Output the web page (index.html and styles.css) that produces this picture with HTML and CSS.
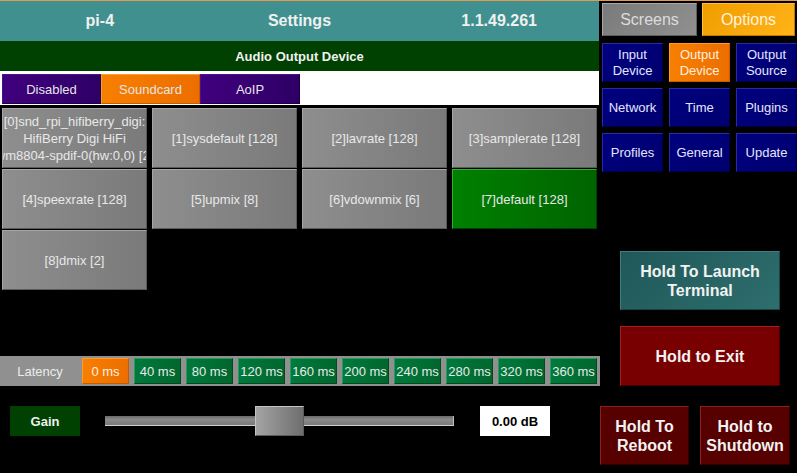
FILE: index.html
```html
<!DOCTYPE html>
<html>
<head>
<meta charset="utf-8">
<link rel="stylesheet" href="styles.css">
</head>
<body>
<div class="app">
  <div class="left">
    <div class="header">
      <div class="hcell">pi-4</div>
      <div class="hcell">Settings</div>
      <div class="hcell">1.1.49.261</div>
    </div>
    <div class="subheader">Audio Output Device</div>
    <div class="tabrow">
      <div class="tab purple">Disabled</div>
      <div class="tab orange">Soundcard</div>
      <div class="tab purple wide">AoIP</div>
    </div>
    <div class="devices">
      <div class="dev multi">
        <div class="ln"><span>[0]snd_rpi_hifiberry_digi:</span></div>
        <div class="ln"><span>HifiBerry Digi HiFi</span></div>
        <div class="ln"><span>wm8804-spdif-0(hw:0,0) [2]</span></div>
      </div>
      <div class="dev">[1]sysdefault [128]</div>
      <div class="dev">[2]lavrate [128]</div>
      <div class="dev">[3]samplerate [128]</div>
      <div class="dev">[4]speexrate [128]</div>
      <div class="dev">[5]upmix [8]</div>
      <div class="dev">[6]vdownmix [6]</div>
      <div class="dev selected">[7]default [128]</div>
      <div class="dev">[8]dmix [2]</div>
    </div>
    <div class="latency">
      <div class="lat-label">Latency</div>
      <div class="lat-buttons">
        <div class="lat lat-on">0 ms</div>
        <div class="lat">40 ms</div>
        <div class="lat">80 ms</div>
        <div class="lat">120 ms</div>
        <div class="lat">160 ms</div>
        <div class="lat">200 ms</div>
        <div class="lat">240 ms</div>
        <div class="lat">280 ms</div>
        <div class="lat">320 ms</div>
        <div class="lat">360 ms</div>
      </div>
    </div>
    <div class="gainrow">
      <div class="gain">Gain</div>
      <div class="slider">
        <div class="track"></div>
        <div class="thumb"></div>
      </div>
      <div class="db">0.00 dB</div>
    </div>
  </div>
  <div class="right">
    <div class="toprow">
      <div class="screens">Screens</div>
      <div class="options">Options</div>
    </div>
    <div class="nav">
      <div class="nb">Input<br>Device</div>
      <div class="nb active">Output<br>Device</div>
      <div class="nb">Output<br>Source</div>
      <div class="nb">Network</div>
      <div class="nb">Time</div>
      <div class="nb">Plugins</div>
      <div class="nb">Profiles</div>
      <div class="nb">General</div>
      <div class="nb">Update</div>
    </div>
    <div class="big terminal">Hold To Launch<br>Terminal</div>
    <div class="big exit">Hold to Exit</div>
    <div class="power">
      <div class="big reboot">Hold To<br>Reboot</div>
      <div class="big shutdown">Hold to<br>Shutdown</div>
    </div>
  </div>
</div>
</body>
</html>
```

FILE: styles.css
```css
* { box-sizing: border-box; }

body {
  margin: 0;
  background: #000;
  font-family: "Liberation Sans", Arial, sans-serif;
  border-top: 1px solid #e39a4f;
  width: 797px;
  height: 473px;
  overflow: hidden;
}

.app {
  display: flex;
  height: 472px;
}

.left {
  width: 599px;
  display: flex;
  flex-direction: column;
}

.header {
  height: 40px;
  background: #3f908f;
  display: grid;
  grid-template-columns: repeat(3, 1fr);
  align-items: center;
  text-align: center;
  color: #f0f0f0;
  font-weight: bold;
  font-size: 16px;
}

.subheader {
  height: 30px;
  background: #004000;
  color: #f0f0f0;
  font-weight: bold;
  font-size: 13px;
  display: flex;
  align-items: center;
  justify-content: center;
}

.tabrow {
  background: #fff;
  height: 34px;
  padding: 3px 0 1px 2px;
  display: flex;
}

.tab {
  width: 99px;
  height: 30px;
  display: flex;
  align-items: center;
  justify-content: center;
  font-size: 13px;
  color: #e6e6e6;
}

.tab.wide { width: 100px; }

.purple {
  background: linear-gradient(90deg, #40007e, #2e0066);
  border: 1px solid #4a1090;
  border-right-color: #1e0044;
  border-bottom-color: #1e0044;
}

.orange {
  background: linear-gradient(90deg, #f77f00, #ec6e00);
  border: 1px solid #ff9a30;
  border-right-color: #c85a00;
  border-bottom-color: #c85a00;
}

.devices {
  margin: 3px 0 0 2px;
  display: grid;
  grid-template-columns: repeat(4, 145px);
  grid-auto-rows: 60px;
  column-gap: 5px;
  row-gap: 1px;
}

.dev {
  background: linear-gradient(90deg, #8e8e8e, #7a7a7a);
  border: 1px solid #a6a6a6;
  border-right-color: #5a5a5a;
  border-bottom-color: #5a5a5a;
  color: #e8e8e8;
  font-size: 13px;
  display: flex;
  align-items: center;
  justify-content: center;
  text-align: center;
  overflow: hidden;
}

.dev.multi {
  flex-direction: column;
  line-height: 17px;
}

.ln {
  width: 100%;
  display: flex;
  justify-content: center;
  white-space: nowrap;
}

.dev.selected {
  background: linear-gradient(90deg, #008000, #006400);
  border-color: #30b030 #004000 #004000 #30b030;
}

.latency {
  margin-top: 66px;
  width: 600px;
  height: 30px;
  background: #909090;
  display: flex;
  align-items: center;
}

.lat-label {
  width: 80px;
  text-align: center;
  color: #ececec;
  font-size: 13px;
}

.lat-buttons {
  margin-left: 2px;
  display: flex;
  gap: 5px;
}

.lat {
  width: 47px;
  height: 26px;
  display: flex;
  align-items: center;
  justify-content: center;
  font-size: 13px;
  color: #eaeaea;
  background: linear-gradient(90deg, #007a3c, #00662e);
  border: 1px solid #2a9a5a;
  border-right-color: #004a20;
  border-bottom-color: #004a20;
}

.lat.lat-on {
  background: linear-gradient(90deg, #f77f00, #ec6e00);
  border-color: #ff9a30 #c85a00 #c85a00 #ff9a30;
  color: #fff0e0;
}

.gainrow {
  margin-top: 20px;
  height: 30px;
  display: flex;
  align-items: center;
  padding-left: 10px;
}

.gain {
  width: 70px;
  height: 30px;
  background: #004000;
  color: #f0f0f0;
  font-weight: bold;
  font-size: 13px;
  display: flex;
  align-items: center;
  justify-content: center;
}

.slider {
  position: relative;
  margin-left: 25px;
  width: 349px;
  height: 30px;
  display: flex;
  align-items: center;
}

.track {
  width: 100%;
  height: 10px;
  background: linear-gradient(180deg, #6a6a6a, #8a8a8a 40%, #7a7a7a);
  border-bottom: 1px solid #cfcfcf;
  border-right: 1px solid #bdbdbd;
}

.thumb {
  position: absolute;
  left: 150px;
  top: 0;
  width: 49px;
  height: 30px;
  background: linear-gradient(90deg, #a4a4a4, #6e6e6e);
  border: 1px solid #c4c4c4;
  border-right-color: #5a5a5a;
  border-bottom-color: #5a5a5a;
}

.db {
  margin-left: 26px;
  width: 70px;
  height: 30px;
  background: #fff;
  color: #000;
  font-weight: bold;
  font-size: 13px;
  display: flex;
  align-items: center;
  justify-content: center;
}

.right {
  width: 198px;
  display: flex;
  flex-direction: column;
  padding-top: 2px;
}

.toprow {
  display: flex;
  gap: 5px;
  margin-left: 3px;
  height: 33px;
}

.screens, .options {
  height: 33px;
  display: flex;
  align-items: center;
  justify-content: center;
  font-size: 16px;
}

.screens {
  width: 95px;
  background: linear-gradient(135deg, #7a7a7a, #909090);
  border: 1px solid #a8a8a8;
  border-right-color: #5e5e5e;
  border-bottom-color: #5e5e5e;
  color: #dcdcdc;
}

.options {
  width: 93px;
  background: linear-gradient(135deg, #f09c00, #ffb418);
  border: 1px solid #ffc040;
  border-right-color: #c07800;
  border-bottom-color: #c07800;
  color: #fff3dc;
}

.nav {
  margin: 7px 0 0 3px;
  display: grid;
  grid-template-columns: repeat(3, 61px);
  grid-auto-rows: 39px;
  gap: 6px;
}

.nb {
  background: linear-gradient(135deg, #00007e, #000070);
  border: 1px solid #2a2aa4;
  border-right-color: #000044;
  border-bottom-color: #000044;
  color: #e4e4ff;
  font-size: 13px;
  line-height: 16px;
  display: flex;
  align-items: center;
  justify-content: center;
  text-align: center;
}

.nb.active {
  background: linear-gradient(90deg, #f77f00, #ec6e00);
  border-color: #ff9a30 #c85a00 #c85a00 #ff9a30;
  color: #fff0e0;
}

.big {
  display: flex;
  align-items: center;
  justify-content: center;
  text-align: center;
  color: #f2f2f2;
  font-weight: bold;
  font-size: 16px;
  line-height: 19px;
}

.terminal {
  margin: 79px 0 0 21px;
  width: 160px;
  height: 59px;
  background: linear-gradient(135deg, #205858, #2e6e6e);
  border: 1px solid #3e8080;
  border-right-color: #174444;
  border-bottom-color: #174444;
}

.exit {
  margin: 16px 0 0 21px;
  width: 160px;
  height: 60px;
  background: #780000;
  border: 1px solid #a02020;
  border-right-color: #4a0000;
  border-bottom-color: #4a0000;
}

.power {
  display: flex;
  gap: 11px;
  margin: 20px 0 0 1px;
}

.reboot, .shutdown {
  height: 59px;
  background: #560000;
  border: 1px solid #8a2020;
  border-right-color: #300000;
  border-bottom-color: #300000;
}

.reboot { width: 89px; }
.shutdown { width: 90px; }
```
